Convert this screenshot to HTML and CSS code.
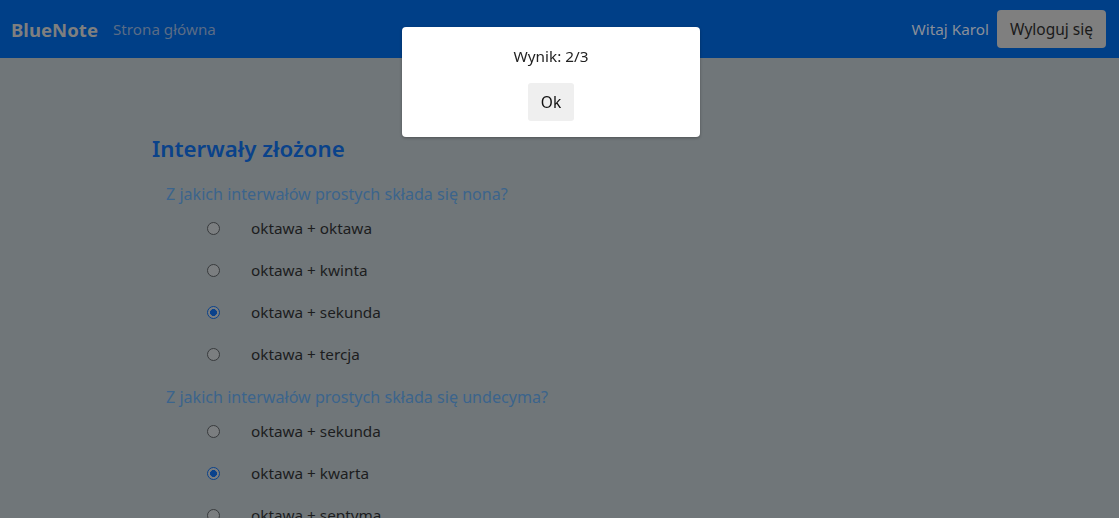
FILE: index.html
```html
<!DOCTYPE html>
<html lang="pl">
<head>
<meta charset="utf-8">
<title>BlueNote</title>
<link rel="stylesheet" href="styles.css">
</head>
<body>
<header class="navbar">
  <div class="nav-left">
    <span class="brand">BlueNote</span>
    <a class="nav-link">Strona główna</a>
  </div>
  <div class="nav-right">
    <span class="greet">Witaj Karol</span>
    <button class="logout">Wyloguj się</button>
  </div>
</header>
<main class="content">
  <h1 class="title">Interwały złożone</h1>
  <section class="question">
    <h2 class="q-text">Z jakich interwałów prostych składa się nona?</h2>
    <ul class="options">
      <li class="option"><span class="radio"></span><span>oktawa + oktawa</span></li>
      <li class="option"><span class="radio"></span><span>oktawa + kwinta</span></li>
      <li class="option"><span class="radio checked"></span><span>oktawa + sekunda</span></li>
      <li class="option"><span class="radio"></span><span>oktawa + tercja</span></li>
    </ul>
  </section>
  <section class="question">
    <h2 class="q-text">Z jakich interwałów prostych składa się undecyma?</h2>
    <ul class="options">
      <li class="option"><span class="radio"></span><span>oktawa + sekunda</span></li>
      <li class="option"><span class="radio checked"></span><span>oktawa + kwarta</span></li>
      <li class="option"><span class="radio"></span><span>oktawa + septyma</span></li>
    </ul>
  </section>
</main>
<div class="modal">
  <p class="modal-text">Wynik: 2/3</p>
  <button class="ok">Ok</button>
</div>
</body>
</html>
```
FILE: styles.css
```css
html, body {
  margin: 0;
  padding: 0;
}
body {
  background: #707679;
  font-family: "Noto Sans", "Open Sans", sans-serif;
  height: 518px;
  overflow: hidden;
}
.navbar {
  height: 58px;
  background: #003f87;
  display: flex;
  align-items: center;
  justify-content: space-between;
  padding: 0 13px 0 11px;
  box-sizing: border-box;
}
.nav-left {
  display: flex;
  align-items: center;
  gap: 15px;
}
.brand {
  color: #7f7f7f;
  font-weight: 700;
  font-size: 18.6px;
}
.nav-link {
  color: #5a6c86;
  font-size: 15.2px;
}
.nav-right {
  display: flex;
  align-items: center;
  gap: 8px;
}
.greet {
  color: #8a8f99;
  font-size: 15.3px;
}
.logout {
  background: #7f7f7f;
  color: #1a1a1a;
  border: none;
  border-radius: 4px;
  font-family: inherit;
  font-size: 15.5px;
  height: 38px;
  padding: 0 13px;
}
.content {
  padding: 75px 0 0 152px;
}
.title {
  margin: 0 0 16px 0;
  color: #0a428a;
  font-size: 22.3px;
  font-weight: 600;
  line-height: 32px;
}
.question {
  margin: 9px 0 0 14px;
}
.q-text {
  margin: 0;
  color: #3b648c;
  font-size: 16.1px;
  font-weight: 400;
  line-height: 26px;
}
.options {
  list-style: none;
  margin: 0;
  padding: 0 0 0 41px;
}
.option {
  display: flex;
  align-items: center;
  height: 42px;
  color: #1c1d1e;
  font-size: 15.3px;
}
.radio {
  width: 11px;
  height: 11px;
  border: 1px solid #383b3d;
  border-radius: 50%;
  background: #7b7e80;
  margin-right: 31px;
  flex: none;
}
.radio.checked {
  border-color: #0a428c;
  background: radial-gradient(circle, #0a428c 0 3.2px, #7b7e80 3.7px);
}
.modal {
  position: fixed;
  top: 27px;
  left: 402px;
  width: 298px;
  height: 110px;
  background: #fff;
  border-radius: 4px;
  box-shadow: 0 1px 3px rgba(0,0,0,0.3);
  display: flex;
  flex-direction: column;
  align-items: center;
  box-sizing: border-box;
  padding-top: 18px;
}
.modal-text {
  margin: 0;
  color: #222;
  font-size: 15.3px;
  line-height: 22px;
}
.ok {
  margin-top: 16px;
  width: 46px;
  height: 38px;
  background: #efefef;
  border: none;
  border-radius: 3px;
  font-family: inherit;
  font-size: 15.5px;
  color: #111;
}
```
